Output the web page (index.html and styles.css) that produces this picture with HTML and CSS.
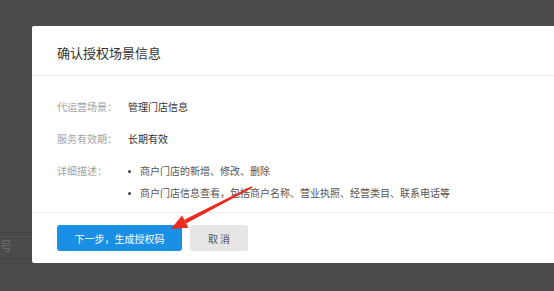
FILE: index.html
```html
<!DOCTYPE html>
<html lang="zh-CN">
<head>
<meta charset="utf-8">
<link rel="stylesheet" href="styles.css">
</head>
<body>
<div class="page">
  <div class="bg-row"><span class="bg-text">号</span></div>
</div>
<div class="modal">
  <div class="modal-header">确认授权场景信息</div>
  <div class="modal-body">
    <div class="row">
      <div class="label">代运营场景：</div>
      <div class="value">管理门店信息</div>
    </div>
    <div class="row">
      <div class="label">服务有效期：</div>
      <div class="value">长期有效</div>
    </div>
    <div class="row row-desc">
      <div class="label">详细描述：</div>
      <ul class="desc">
        <li>商户门店的新增、修改、删除</li>
        <li>商户门店信息查看，包括商户名称、营业执照、经营类目、联系电话等</li>
      </ul>
    </div>
  </div>
  <div class="modal-footer">
    <button class="btn btn-primary">下一步，生成授权码</button>
    <button class="btn btn-cancel">取 消</button>
  </div>
</div>
<svg class="arrow" width="554" height="291" viewBox="0 0 554 291">
  <polygon points="171,229 188.4,227.8 182,215.4" fill="#ec2a1e"/>
  <polygon points="184.3,219.8 186.1,223.4 252.5,187.8 251.5,186.2" fill="#ec2a1e"/>
</svg>
</body>
</html>
```
FILE: styles.css
```css
html, body {
  margin: 0;
  padding: 0;
}
body {
  width: 554px;
  height: 291px;
  overflow: hidden;
  background: #4b4b4b;
  font-family: "Noto Sans CJK SC", "Microsoft YaHei", sans-serif;
  position: relative;
}
.page {
  padding-top: 232px;
}
.bg-row {
  height: 25px;
  border-top: 1px solid #444;
  border-bottom: 1px solid #444;
  display: flex;
  align-items: center;
}
.bg-text {
  font-size: 12px;
  color: #6e6e6e;
  margin-left: 0;
}
.modal {
  position: absolute;
  left: 32px;
  top: 26px;
  width: 560px;
  background: #fff;
  border-radius: 2px;
}
.modal-header {
  height: 50px;
  box-sizing: border-box;
  padding: 0 25px;
  display: flex;
  align-items: center;
  padding-top: 4px;
  font-size: 13px;
  color: #333;
  border-bottom: 1px solid #eeeeee;
}
.modal-body {
  padding: 23px 25px 11px;
  font-size: 10px;
  line-height: 16px;
}
.row {
  display: flex;
  margin-bottom: 16px;
}
.row-desc {
  margin-top: 4px;
  margin-bottom: 0;
}
.label {
  width: 71px;
  flex: none;
  color: #a3a3a3;
}
.value {
  color: #333;
}
.desc {
  list-style: none;
  margin: 0;
  padding: 0;
  display: flex;
  flex-direction: column;
  gap: 6px;
  color: #555;
}
.desc li {
  display: flex;
  align-items: center;
}
.desc li::before {
  content: "";
  width: 3px;
  height: 3px;
  border-radius: 50%;
  background: #444;
  margin-right: 9px;
  flex: none;
}
.modal-footer {
  border-top: 1px solid #f0f0f0;
  padding: 12px 25px 12px;
  display: flex;
  gap: 8px;
}
.btn {
  height: 26px;
  border: none;
  border-radius: 3px;
  font-family: inherit;
  font-size: 10px;
  padding: 0;
  cursor: pointer;
}
.btn-primary {
  width: 125px;
  background: #1a8fe6;
  color: #fff;
}
.btn-cancel {
  width: 58px;
  background: #e6e6e6;
  color: #555;
}
.arrow {
  position: absolute;
  left: 0;
  top: 0;
  pointer-events: none;
}
```
